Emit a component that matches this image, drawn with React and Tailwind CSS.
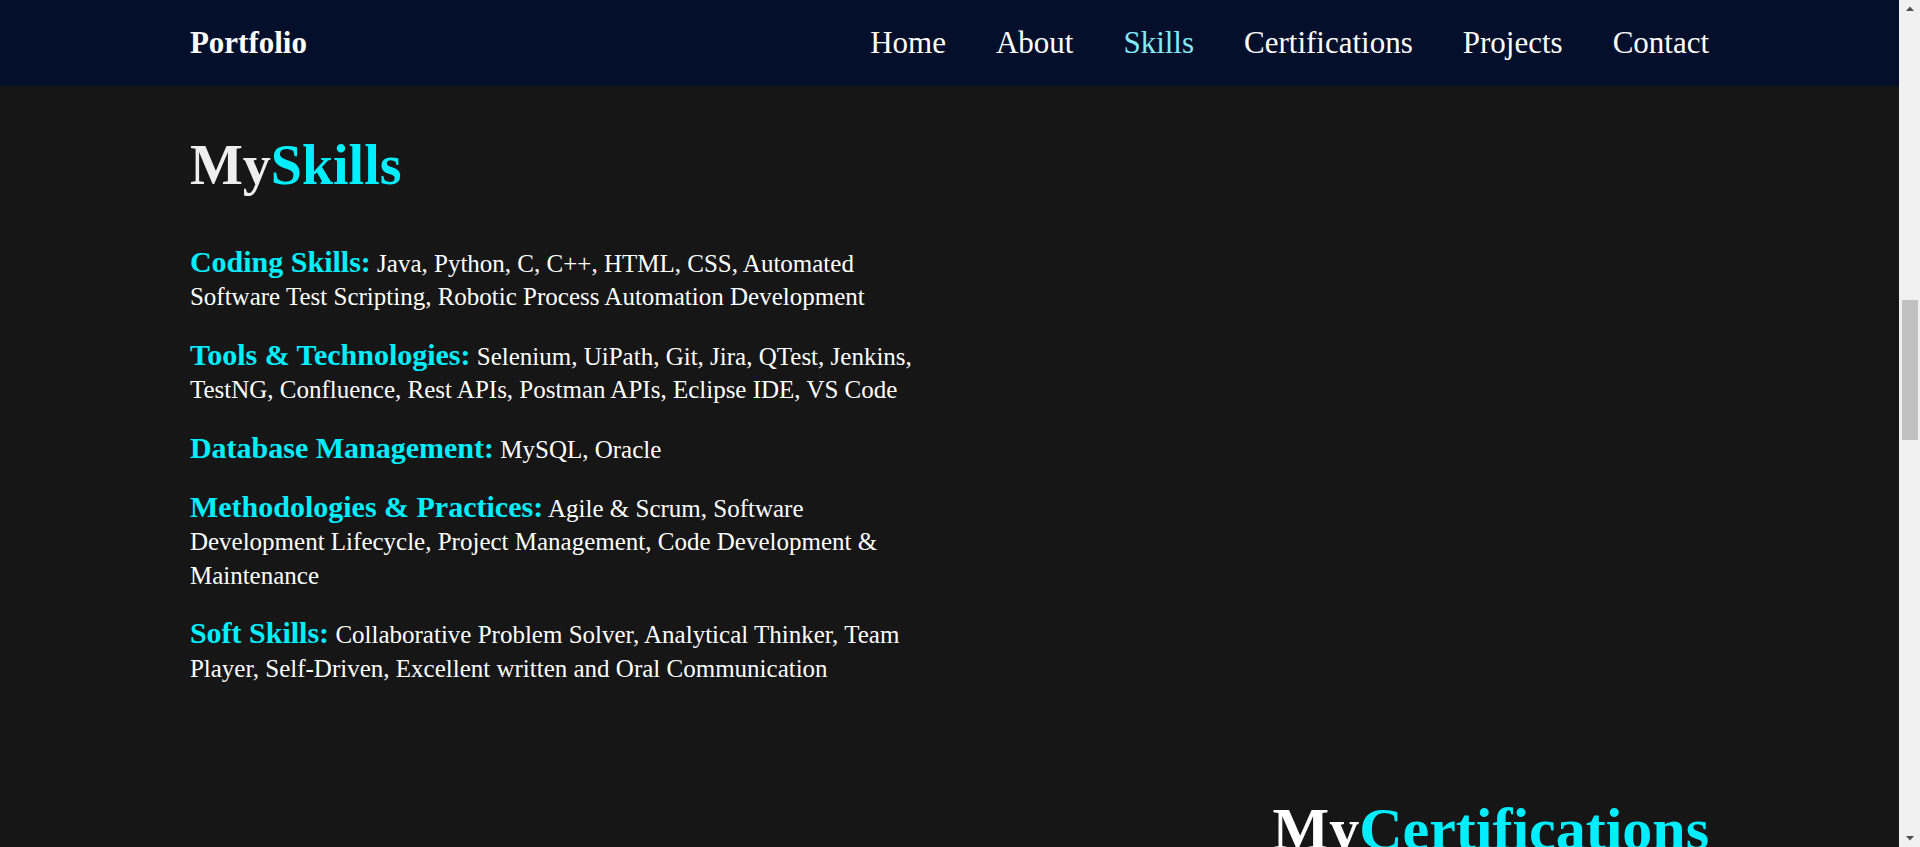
import React from "react";

const navLinks = ["Home", "About", "Skills", "Certifications", "Projects", "Contact"];

const skills = [
  {
    label: "Coding Skills:",
    text: "Java, Python, C, C++, HTML, CSS, Automated Software Test Scripting, Robotic Process Automation Development",
  },
  {
    label: "Tools & Technologies:",
    text: "Selenium, UiPath, Git, Jira, QTest, Jenkins, TestNG, Confluence, Rest APIs, Postman APIs, Eclipse IDE, VS Code",
  },
  { label: "Database Management:", text: "MySQL, Oracle" },
  {
    label: "Methodologies & Practices:",
    text: "Agile & Scrum, Software Development Lifecycle, Project Management, Code Development & Maintenance",
  },
  {
    label: "Soft Skills:",
    text: "Collaborative Problem Solver, Analytical Thinker, Team Player, Self-Driven, Excellent written and Oral Communication",
  },
];

function Scrollbar() {
  return (
    <div className="flex h-full w-[21px] shrink-0 flex-col bg-[#f1f1f1]">
      <div className="flex h-[17px] items-center justify-center">
        <svg width="21" height="17" viewBox="0 0 21 17">
          <polygon points="7,11 11,6.5 15,11" fill="#505050" />
        </svg>
      </div>
      <div className="flex-1 pt-[283px]">
        <div className="ml-[3px] mr-[2px] h-[140px] bg-[#c1c1c1]"></div>
      </div>
      <div className="flex h-[17px] items-center justify-center">
        <svg width="21" height="17" viewBox="0 0 21 17">
          <polygon points="7,6 11,10.5 15,6" fill="#505050" />
        </svg>
      </div>
    </div>
  );
}

export default function App() {
  return (
    <div className="flex h-[847px] overflow-hidden bg-[#161616] font-['Liberation_Serif',serif] leading-[normal] text-white">
      <div className="flex min-w-0 flex-1 flex-col">
        <nav className="h-[86px] shrink-0 bg-[#04102b]">
          <div className="mx-auto flex h-full w-[80%] items-center justify-between">
            <a href="#home" className="text-[31px] font-bold text-white">
              Portfolio
            </a>
            <ul className="flex items-center gap-[50px] text-[31px]">
              {navLinks.map((l) => (
                <li key={l}>
                  <a
                    href={`#${l.toLowerCase()}`}
                    className={l === "Skills" ? "text-[#85e9f7]" : "text-white"}
                  >
                    {l}
                  </a>
                </li>
              ))}
            </ul>
          </div>
        </nav>

        <main className="min-h-0 flex-1 overflow-hidden">
          <section id="skills" className="mx-auto w-[80%] pt-[47px]">
            <h2 className="text-[56px] font-bold leading-[normal]">
              <span className="text-[#eeeeee]">My</span>
              <span className="text-[#00eeff]">Skills</span>
            </h2>
            <div className="mt-[48px] max-w-[740px]">
              {skills.map((s) => (
                <p key={s.label} className="mb-[24px] text-[25px] leading-[33.4px]">
                  <span className="text-[30px] font-bold text-[#00eeff]">{s.label}</span>{" "}
                  {s.text}
                </p>
              ))}
            </div>
          </section>

          <section id="certifications" className="mx-auto w-[80%] pt-[86px] text-right">
            <h2 className="text-[60px] font-bold leading-[normal]">
              <span className="text-white">My</span>
              <span className="text-[#00eeff]">Certifications</span>
            </h2>
          </section>
        </main>
      </div>
      <Scrollbar />
    </div>
  );
}
